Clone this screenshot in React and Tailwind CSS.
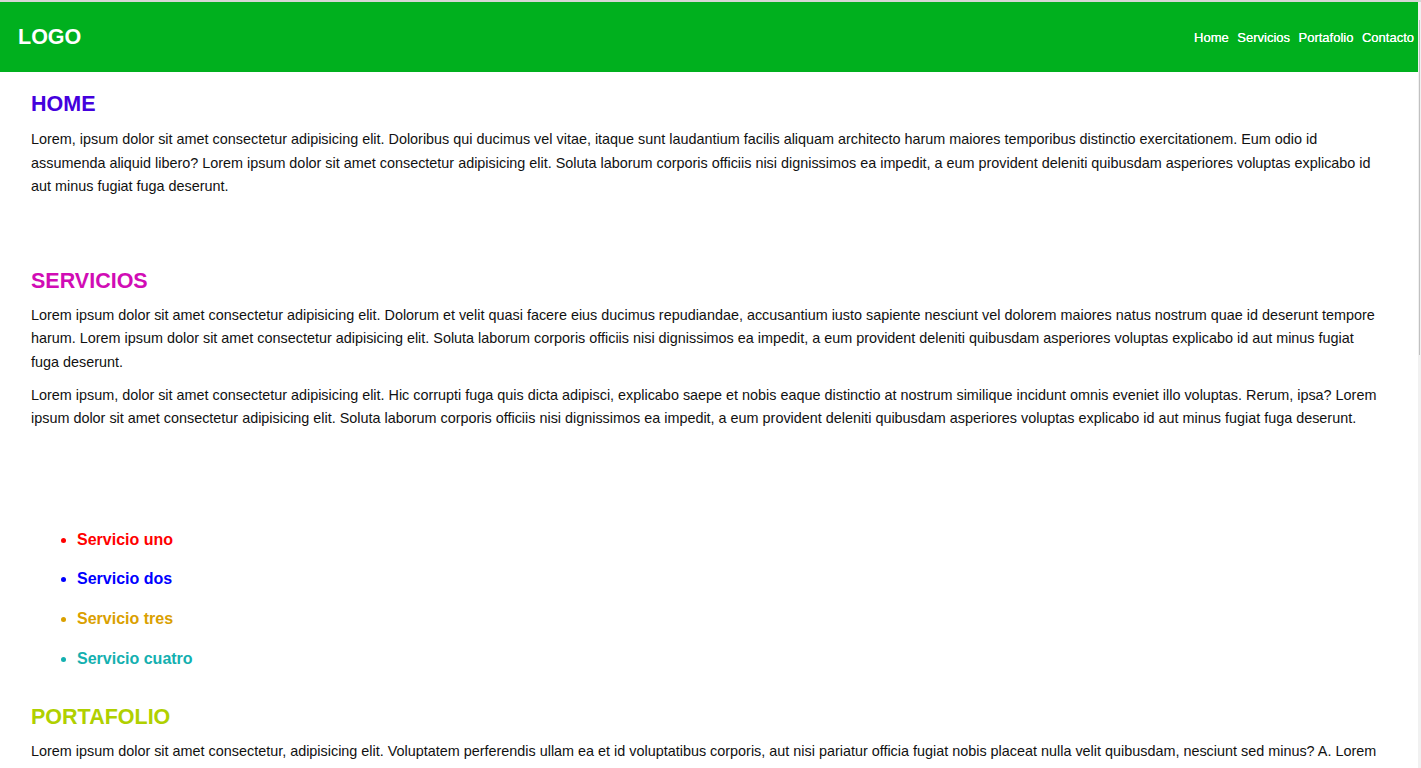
import React from 'react'

const servicios = [
  { name: 'Servicio uno', color: 'text-[#ff0000]' },
  { name: 'Servicio dos', color: 'text-[#0000ff]' },
  { name: 'Servicio tres', color: 'text-[#daa000]' },
  { name: 'Servicio cuatro', color: 'text-[#14b0b0]' },
]

export default function App() {
  return (
    <div className="h-[768px] overflow-hidden bg-white flex flex-col font-['Liberation_Sans',Arial,sans-serif]">
      <div className="h-[2px] bg-[#d6d6d6] shrink-0"></div>
      <div className="flex flex-1 min-h-0">
        <div className="flex-1 min-w-0">
          <header className="h-[70px] bg-[#00b01e] flex items-center justify-between pl-[18px] pr-[4px] pt-[2px]">
            <h1 className="text-white font-bold text-[21.5px] leading-none">LOGO</h1>
            <nav className="flex items-center gap-[8.5px]">
              <a href="#" className="text-white text-[13px] [text-shadow:0_0_0.5px_white]">Home</a>
              <a href="#" className="text-white text-[13px] [text-shadow:0_0_0.5px_white]">Servicios</a>
              <a href="#" className="text-white text-[13px] [text-shadow:0_0_0.5px_white]">Portafolio</a>
              <a href="#" className="text-white text-[13px] [text-shadow:0_0_0.5px_white]">Contacto</a>
            </nav>
          </header>

          <main className="pl-[31px] pr-[37px] text-[#111] text-[14.4px] leading-[23.5px]">
            <section>
              <h2 className="mt-[19px] text-[21.5px] leading-[26px] font-bold text-[#4400dd]">HOME</h2>
              <p className="mt-[11px]">
                Lorem, ipsum dolor sit amet consectetur adipisicing elit. Doloribus qui ducimus vel vitae, itaque sunt laudantium facilis aliquam architecto harum maiores temporibus distinctio exercitationem. Eum odio id<br />
                assumenda aliquid libero? Lorem ipsum dolor sit amet consectetur adipisicing elit. Soluta laborum corporis officiis nisi dignissimos ea impedit, a eum provident deleniti quibusdam asperiores voluptas explicabo id aut minus fugiat fuga deserunt.
              </p>
            </section>

            <section>
              <h2 className="mt-[69px] text-[21.5px] leading-[26px] font-bold text-[#d10cb5]">SERVICIOS</h2>
              <p className="mt-[10px]">
                Lorem ipsum dolor sit amet consectetur adipisicing elit. Dolorum et velit quasi facere eius ducimus repudiandae, accusantium iusto sapiente nesciunt vel dolorem maiores natus nostrum quae id deserunt tempore harum. Lorem ipsum dolor sit amet consectetur adipisicing elit. Soluta laborum corporis officiis nisi dignissimos ea impedit, a eum provident deleniti quibusdam asperiores voluptas explicabo id aut minus fugiat fuga deserunt.
              </p>
              <p className="mt-[9.5px]">
                Lorem ipsum, dolor sit amet consectetur adipisicing elit. Hic corrupti fuga quis dicta adipisci, explicabo saepe et nobis eaque distinctio at nostrum similique incidunt omnis eveniet illo voluptas. Rerum, ipsa? Lorem ipsum dolor sit amet consectetur adipisicing elit. Soluta laborum corporis officiis nisi dignissimos ea impedit, a eum provident deleniti quibusdam asperiores voluptas explicabo id aut minus fugiat fuga deserunt.
              </p>
              <ul className="mt-[89px] list-disc pl-[46px]">
                {servicios.map((s) => (
                  <li key={s.name} className={`${s.color} text-[16px] font-bold leading-[39.7px]`}>{s.name}</li>
                ))}
              </ul>
            </section>

            <section>
              <h2 className="mt-[26px] text-[21.5px] leading-[26px] font-bold text-[#b0d000]">PORTAFOLIO</h2>
              <p className="mt-[10px]">
                Lorem ipsum dolor sit amet consectetur, adipisicing elit. Voluptatem perferendis ullam ea et id voluptatibus corporis, aut nisi pariatur officia fugiat nobis placeat nulla velit quibusdam, nesciunt sed minus? A. Lorem ipsum dolor sit amet consectetur adipisicing elit. Soluta laborum corporis officiis nisi dignissimos ea impedit, a eum provident deleniti quibusdam asperiores voluptas explicabo id aut minus fugiat fuga deserunt.
              </p>
            </section>
          </main>
        </div>

        <div className="w-[3px] shrink-0 bg-[#f1f1f1] flex justify-center">
          <div className="w-[1px] h-[335px] mt-[18px] bg-[#c1c1c1]"></div>
        </div>
      </div>
    </div>
  )
}
